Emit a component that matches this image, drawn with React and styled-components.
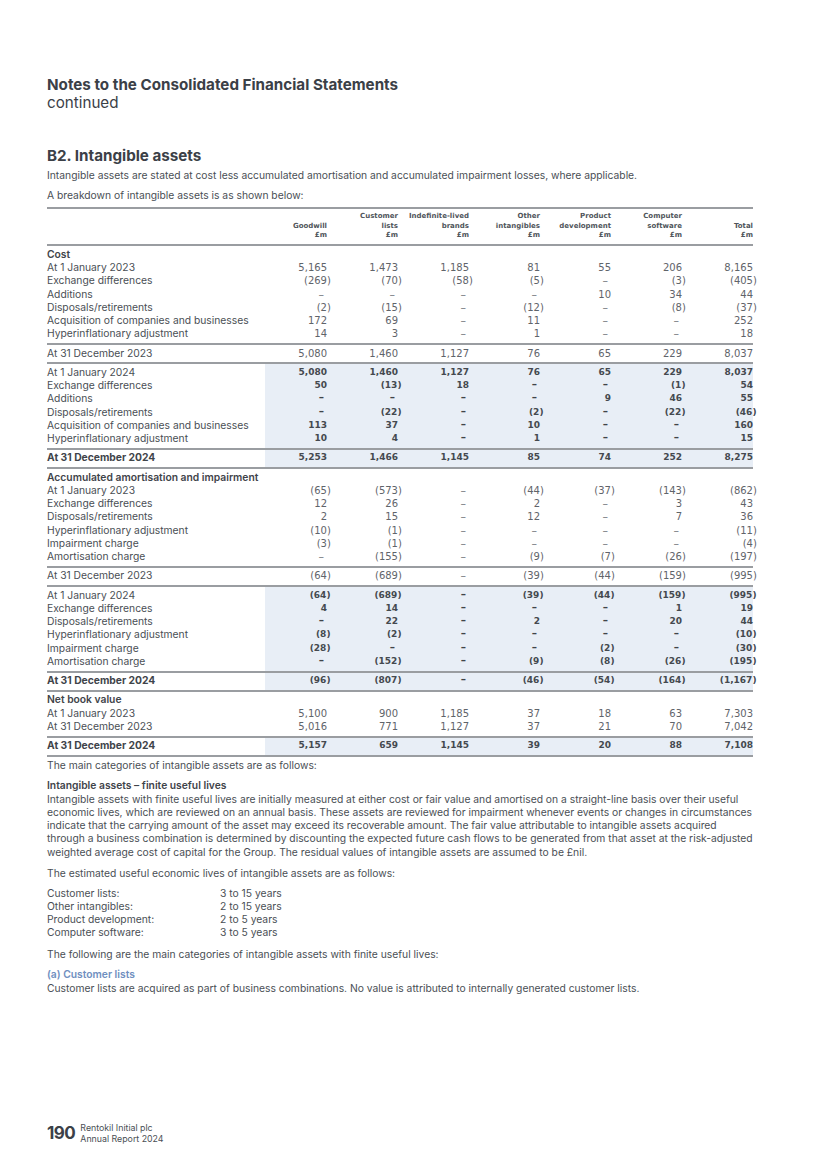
import React from 'react'
import styled, { createGlobalStyle } from 'styled-components'

////////Styles///////////
const GlobalStyle = createGlobalStyle`
  body {
    margin: 0;
    background: #ffffff;
  }
`
const Page = styled.div`
  width: 825px;
  height: 1168px;
  box-sizing: border-box;
  padding: 76px 72px 24px 47px;
  display: flex;
  flex-direction: column;
  font-family: Inter, Lato, sans-serif;
  color: #4a4f55;
  font-size: 10.3px;
  line-height: 13.25px;
`
const Title = styled.h1`
  margin: 0;
  font-size: 15.2px;
  line-height: 18px;
  font-weight: 700;
  color: #3b4047;
`
const Subtitle = styled.div`
  font-size: 15.2px;
  line-height: 18px;
  color: #3b4047;
`
const Heading = styled.h2`
  margin: 35px 0 0;
  font-size: 15.2px;
  line-height: 18px;
  font-weight: 700;
  color: #3b4047;
`
const Para = styled.p`
  margin: ${({ $gap }) => $gap ?? 6.75}px 0 0;
`
const SubHead = styled.div`
  margin-top: 6.75px;
  font-weight: 600;
  color: #3f444a;
`
const BlueHead = styled(SubHead)`
  color: #6f8fc0;
`
const Lives = styled.div`
  margin-top: 6.75px;
  display: grid;
  grid-template-columns: 173px auto;
`
const Table = styled.div`
  margin-top: 5.5px;
  display: flex;
  flex-direction: column;
`
const Block = styled.div`
  display: grid;
  grid-template-columns: 218px 62px repeat(6, 71px);
  grid-auto-rows: ${({ $head }) => ($head ? 'auto' : '13.25px')};
  border-top: 2px solid #9a9da1;
  padding: ${({ $head }) => ($head ? '3px 0 3.5px' : '1.5px 0 2.5px')};
  background: ${({ $shaded }) =>
    $shaded
      ? 'linear-gradient(to right, transparent 218px, #e8eef6 218px)'
      : 'none'};
  ${({ $last }) => $last && 'border-bottom: 2px solid #9a9da1;'}
`
const HeadCell = styled.div`
  align-self: end;
  text-align: right;
  font-family: 'DejaVu Sans', sans-serif;
  font-weight: 700;
  font-size: 7px;
  line-height: 9.5px;
  color: #50555b;
`
const Label = styled.div`
  grid-column: 1;
  white-space: nowrap;
  font-weight: ${({ $bold }) => ($bold ? 700 : 400)};
  color: ${({ $bold }) => ($bold ? '#3f444a' : '#4a4f55')};
`
const Section = styled(Label)`
  grid-column: 1 / -1;
  font-weight: 600;
  color: #3f444a;
`
const Cell = styled.div`
  text-align: right;
  white-space: nowrap;
  overflow: visible;
  font-family: 'DejaVu Sans', sans-serif;
  font-size: ${({ $bold }) => ($bold ? '9px' : '10px')};
  font-weight: ${({ $bold }) => ($bold ? 700 : 400)};
  color: ${({ $bold }) => ($bold ? '#44494f' : '#5f646a')};
`
const Paren = styled.span`
  display: inline-block;
  margin-right: -0.39em;
`
const Dash = styled.span`
  display: inline-block;
  margin-right: 3px;
  line-height: 1;
  font-size: ${({ $bold }) => ($bold ? '10.5px' : '11px')};
  color: ${({ $bold }) => ($bold ? '#3f444a' : '#6f7379')};
`
const Footer = styled.div`
  margin-top: auto;
  display: flex;
  align-items: center;
  gap: 5px;
`
const PageNo = styled.div`
  font-size: 17px;
  font-weight: 700;
  color: #3b4047;
  line-height: 20px;
  letter-spacing: -0.5px;
`
const Imprint = styled.div`
  font-size: 8.8px;
  line-height: 11px;
  color: #4a4f55;
`

////////Data///////////
const heads = [
  ['Goodwill', '£m'],
  ['Customer', 'lists', '£m'],
  ['Indefinite-lived', 'brands', '£m'],
  ['Other', 'intangibles', '£m'],
  ['Product', 'development', '£m'],
  ['Computer', 'software', '£m'],
  ['Total', '£m'],
]

const blocks = [
  {
    section: 'Cost',
    rows: [
      ['At 1 January 2023', '5,165', '1,473', '1,185', '81', '55', '206', '8,165'],
      ['Exchange differences', '(269)', '(70)', '(58)', '(5)', '–', '(3)', '(405)'],
      ['Additions', '–', '–', '–', '–', '10', '34', '44'],
      ['Disposals/retirements', '(2)', '(15)', '–', '(12)', '–', '(8)', '(37)'],
      ['Acquisition of companies and businesses', '172', '69', '–', '11', '–', '–', '252'],
      ['Hyperinflationary adjustment', '14', '3', '–', '1', '–', '–', '18'],
    ],
  },
  {
    rows: [['At 31 December 2023', '5,080', '1,460', '1,127', '76', '65', '229', '8,037']],
  },
  {
    shaded: true,
    boldNums: true,
    rows: [
      ['At 1 January 2024', '5,080', '1,460', '1,127', '76', '65', '229', '8,037'],
      ['Exchange differences', '50', '(13)', '18', '–', '–', '(1)', '54'],
      ['Additions', '–', '–', '–', '–', '9', '46', '55'],
      ['Disposals/retirements', '–', '(22)', '–', '(2)', '–', '(22)', '(46)'],
      ['Acquisition of companies and businesses', '113', '37', '–', '10', '–', '–', '160'],
      ['Hyperinflationary adjustment', '10', '4', '–', '1', '–', '–', '15'],
    ],
  },
  {
    shaded: true,
    boldNums: true,
    boldLabel: true,
    rows: [['At 31 December 2024', '5,253', '1,466', '1,145', '85', '74', '252', '8,275']],
  },
  {
    section: 'Accumulated amortisation and impairment',
    rows: [
      ['At 1 January 2023', '(65)', '(573)', '–', '(44)', '(37)', '(143)', '(862)'],
      ['Exchange differences', '12', '26', '–', '2', '–', '3', '43'],
      ['Disposals/retirements', '2', '15', '–', '12', '–', '7', '36'],
      ['Hyperinflationary adjustment', '(10)', '(1)', '–', '–', '–', '–', '(11)'],
      ['Impairment charge', '(3)', '(1)', '–', '–', '–', '–', '(4)'],
      ['Amortisation charge', '–', '(155)', '–', '(9)', '(7)', '(26)', '(197)'],
    ],
  },
  {
    rows: [['At 31 December 2023', '(64)', '(689)', '–', '(39)', '(44)', '(159)', '(995)']],
  },
  {
    shaded: true,
    boldNums: true,
    rows: [
      ['At 1 January 2024', '(64)', '(689)', '–', '(39)', '(44)', '(159)', '(995)'],
      ['Exchange differences', '4', '14', '–', '–', '–', '1', '19'],
      ['Disposals/retirements', '–', '22', '–', '2', '–', '20', '44'],
      ['Hyperinflationary adjustment', '(8)', '(2)', '–', '–', '–', '–', '(10)'],
      ['Impairment charge', '(28)', '–', '–', '–', '(2)', '–', '(30)'],
      ['Amortisation charge', '–', '(152)', '–', '(9)', '(8)', '(26)', '(195)'],
    ],
  },
  {
    shaded: true,
    boldNums: true,
    boldLabel: true,
    rows: [['At 31 December 2024', '(96)', '(807)', '–', '(46)', '(54)', '(164)', '(1,167)']],
  },
  {
    section: 'Net book value',
    rows: [
      ['At 1 January 2023', '5,100', '900', '1,185', '37', '18', '63', '7,303'],
      ['At 31 December 2023', '5,016', '771', '1,127', '37', '21', '70', '7,042'],
    ],
  },
  {
    shaded: true,
    boldNums: true,
    boldLabel: true,
    last: true,
    rows: [['At 31 December 2024', '5,157', '659', '1,145', '39', '20', '88', '7,108']],
  },
]

const lives = [
  ['Customer lists:', '3 to 15 years'],
  ['Other intangibles:', '2 to 15 years'],
  ['Product development:', '2 to 5 years'],
  ['Computer software:', '3 to 5 years'],
]

// closing bracket hangs past the digit column
const Value = ({ v, bold }) => {
  if (v === '–') return <Dash $bold={bold}>–</Dash>
  if (v.endsWith(')'))
    return (
      <>
        {v.slice(0, -1)}
        <Paren>)</Paren>
      </>
    )
  return v
}

const App = () => {
  return (
    <Page>
      <GlobalStyle />
      <Title>Notes to the Consolidated Financial Statements</Title>
      <Subtitle>continued</Subtitle>

      <Heading>B2. Intangible assets</Heading>
      <Para $gap={3.5}>
        Intangible assets are stated at cost less accumulated amortisation and
        accumulated impairment losses, where applicable.
      </Para>
      <Para>A breakdown of intangible assets is as shown below:</Para>

      <Table>
        <Block $head>
          <div />
          {heads.map(h => (
            <HeadCell key={h[0]}>
              {h.map(line => (
                <div key={line}>{line}</div>
              ))}
            </HeadCell>
          ))}
        </Block>
        {blocks.map((b, i) => (
          <Block key={i} $shaded={b.shaded} $last={b.last}>
            {b.section && <Section>{b.section}</Section>}
            {b.rows.map(r => (
              <React.Fragment key={r[0]}>
                <Label $bold={b.boldLabel}>{r[0]}</Label>
                {r.slice(1).map((v, j) => (
                  <Cell key={j} $bold={b.boldNums}>
                    <Value v={v} bold={b.boldNums} />
                  </Cell>
                ))}
              </React.Fragment>
            ))}
          </Block>
        ))}
      </Table>

      <Para $gap={2.5}>The main categories of intangible assets are as follows:</Para>
      <SubHead>Intangible assets – finite useful lives</SubHead>
      <Para $gap={0}>
        Intangible assets with finite useful lives are initially measured at
        either cost or fair value and amortised on a straight-line basis over
        their useful economic lives, which are reviewed on an annual basis.
        These assets are reviewed for impairment whenever events or changes in
        circumstances indicate that the carrying amount of the asset may exceed
        its recoverable amount. The fair value attributable to intangible assets
        acquired through a business combination is determined by discounting
        the expected future cash flows to be generated from that asset at the
        risk-adjusted weighted average cost of capital for the Group. The
        residual values of intangible assets are assumed to be £nil.
      </Para>
      <Para $gap={7.75}>
        The estimated useful economic lives of intangible assets are as follows:
      </Para>
      <Lives>
        {lives.map(l => (
          <React.Fragment key={l[0]}>
            <div>{l[0]}</div>
            <div>{l[1]}</div>
          </React.Fragment>
        ))}
      </Lives>
      <Para $gap={8.75}>
        The following are the main categories of intangible assets with finite
        useful lives:
      </Para>
      <BlueHead>(a) Customer lists</BlueHead>
      <Para $gap={0}>
        Customer lists are acquired as part of business combinations. No value
        is attributed to internally generated customer lists.
      </Para>

      <Footer>
        <PageNo>190</PageNo>
        <Imprint>
          <div>Rentokil Initial plc</div>
          <div>Annual Report 2024</div>
        </Imprint>
      </Footer>
    </Page>
  )
}

export default App
